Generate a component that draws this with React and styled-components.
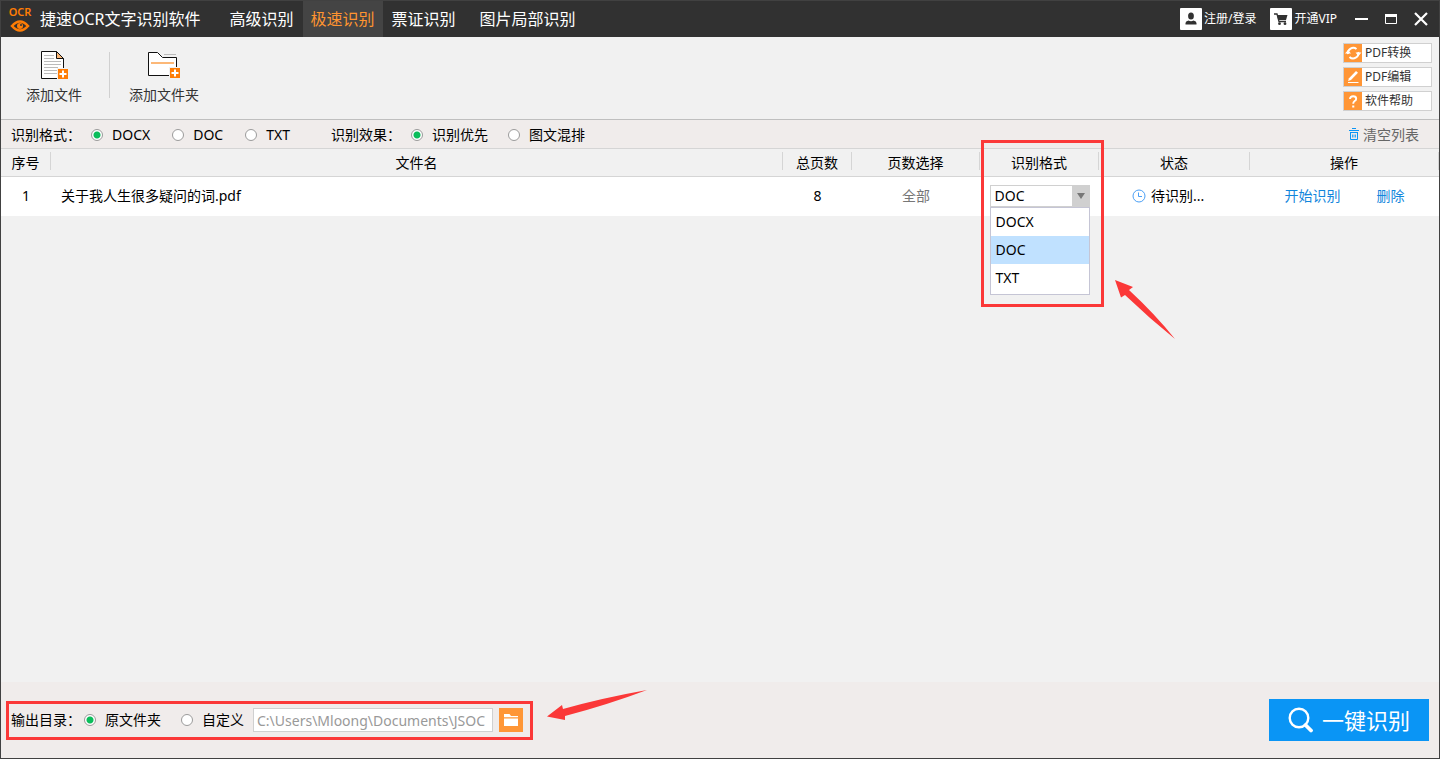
import React, { useState } from "react";
import styled, { createGlobalStyle } from "styled-components";

const GlobalStyle = createGlobalStyle`
  * {
    box-sizing: border-box;
  }

  body {
    margin: 0;
    font-family: "Noto Sans", "Noto Sans CJK SC", sans-serif;
    font-size: 14px;
    line-height: 20px;
    color: #000;
  }

  button,
  input,
  select {
    font: inherit;
    color: inherit;
  }

  button {
    padding: 0;
    border: none;
    background: none;
    cursor: pointer;
  }

  svg {
    display: block;
    flex: none;
  }
`;

const Window = styled.div`
  min-height: 100vh;
  display: flex;
  flex-direction: column;
  background: #f1f1f1;
  border: 1px solid #414141;
`;

const TitleBar = styled.header`
  display: flex;
  align-items: center;
  height: 36px;
  background: #313131;
  color: #fff;
`;

const Brand = styled.div`
  display: flex;
  align-items: center;
  gap: 7px;
  padding-left: 7px;
  margin-right: 21px;
  font-size: 16px;
`;

const Tabs = styled.nav`
  display: flex;
  flex: 1;
  align-self: stretch;
  gap: 1px;
`;

const Tab = styled.button`
  padding: 0 ${({ $wide }) => ($wide ? 15 : 8)}px;
  font-size: 16px;
  color: ${({ $active }) => ($active ? "#ff9430" : "#fff")};
  background: ${({ $active }) => ($active ? "#444" : "transparent")};
`;

const Account = styled.div`
  display: flex;
  gap: 14px;
  margin-right: 18px;
`;

const AccountButton = styled.button`
  display: flex;
  align-items: center;
  gap: 2px;
  font-size: 12px;
`;

const WindowControls = styled.div`
  display: flex;
  gap: 17px;
  padding-right: 11px;
`;

const Toolbar = styled.div`
  display: flex;
  justify-content: space-between;
  height: 83px;
  border-bottom: 1px solid #bfbfbf;
`;

const AddActions = styled.div`
  display: flex;
  align-items: flex-start;
  padding: 13px 0 0 25px;
`;

const AddButton = styled.button`
  display: flex;
  flex-direction: column;
  align-items: center;
  gap: 5px;
  color: #333;
`;

const Divider = styled.span`
  width: 1px;
  height: 46px;
  margin: 2px 19px 0 27px;
  background: #d0d0d0;
`;

const SideLinks = styled.div`
  display: flex;
  flex-direction: column;
  gap: 4px;
  width: 89px;
  margin: 6px 7px 0 0;
`;

const SideButton = styled.button`
  display: flex;
  align-items: center;
  gap: 3px;
  height: 20px;
  border: 1px solid #d0d0d0;
  background: #fff;
  font-size: 12px;
  line-height: 18px;
  color: #333;
`;

const OptionsBar = styled.div`
  display: flex;
  align-items: center;
  height: 29px;
  padding: 1px 20px 0 10px;
  background: #f0eceb;
  border-bottom: 1px solid #d5d5d5;
`;

const RadioGroup = styled.div`
  display: flex;
  align-items: center;
  gap: ${({ $gap }) => $gap}px;
  margin-right: 41px;
`;

const GroupLabel = styled.span`
  width: 70px;
  margin-right: ${({ $gap }) => $gap}px;
`;

const RadioLabel = styled.label`
  display: flex;
  align-items: center;
  gap: 9px;
`;

const RadioInput = styled.input`
  appearance: none;
  width: 12px;
  height: 12px;
  margin: 0;
  border: 1px solid #9b9b9b;
  border-radius: 50%;
  background: #fff;

  &:checked {
    background: radial-gradient(circle, #0bbd5b 3px, #fff 4px);
  }
`;

const ClearButton = styled.button`
  display: flex;
  align-items: center;
  gap: 4px;
  margin-left: auto;
  color: #666;
`;

const FileTable = styled.table`
  width: 100%;
  table-layout: fixed;
  border-collapse: collapse;
`;

const HeadCell = styled.th`
  width: ${({ $width }) => ($width ? `${$width}px` : "auto")};
  height: 27px;
  padding: 0;
  font-weight: 400;
  border-bottom: 1px solid #d5d5d5;
`;

const HeadLabel = styled.div`
  height: 18px;
  margin-bottom: 2px;
  line-height: 21px;
  border-right: 1px solid #d5d5d5;
`;

const Cell = styled.td`
  height: 40px;
  padding: 0 ${({ $indent }) => $indent || 0}px;
  text-align: ${({ $indent }) => ($indent ? "left" : "center")};
  background: #fff;
  color: ${({ $muted }) => ($muted ? "#777" : "#000")};
`;

const Status = styled.div`
  display: flex;
  align-items: center;
  gap: 5px;
  white-space: nowrap;
`;

const RowActions = styled.div`
  display: flex;
  justify-content: center;
  gap: 36px;
`;

const RowAction = styled.button`
  color: #1286dc;
`;

const FormatPicker = styled.div`
  position: relative;
  width: 100px;
  margin: 0 auto;
  text-align: left;
`;

const FormatSelect = styled.select`
  display: block;
  appearance: none;
  width: 100%;
  height: 22px;
  padding: 0 22px 0 4px;
  border: 1px solid #d0d0d0;
  border-radius: 0;
  background: #fff;
  line-height: 20px;
`;

const SelectArrow = styled.span`
  position: absolute;
  top: 0;
  right: 0;
  display: flex;
  align-items: center;
  justify-content: center;
  width: 18px;
  height: 22px;
  background: #d0d0d0;
  pointer-events: none;
`;

const FormatMenu = styled.ul`
  position: absolute;
  top: 22px;
  left: 0;
  z-index: 2;
  width: 100%;
  margin: 0;
  padding: 0 0 2px;
  list-style: none;
  background: #fff;
  border: 1px solid #c5c5d5;
`;

const FormatOption = styled.li`
  padding: 0 5px;
  line-height: 28px;
  background: ${({ $selected }) => ($selected ? "#c0e1ff" : "#fff")};
  cursor: pointer;
`;

const Highlight = styled.div`
  position: absolute;
  z-index: 3;
  border: 3px solid #fb3838;
  pointer-events: none;
`;

const FormatHighlight = styled(Highlight)`
  inset: -45px -14px -100px -9px;
`;

const OutputHighlight = styled(Highlight)`
  inset: -7px -10px -8px -5px;
`;

const FormatPointer = styled.svg`
  position: absolute;
  top: 95px;
  left: 125px;
  z-index: 3;
`;

const OutputPointer = styled.svg`
  position: absolute;
  bottom: 12px;
  left: calc(100% + 24px);
`;

const FileList = styled.main`
  flex: 1;
`;

const Footer = styled.footer`
  display: flex;
  align-items: center;
  justify-content: space-between;
  height: 76px;
  padding: 0 10px;
  background: #f0eceb;
`;

const Output = styled.div`
  position: relative;
  display: flex;
  align-items: center;
`;

const OutputChoices = styled.div`
  display: flex;
  gap: 20px;
  margin-right: 9px;
`;

const PathInput = styled.input`
  width: 240px;
  height: 24px;
  padding: 0 3px;
  border: 1px solid #d0d0d0;
  background: #fff;
  color: #999;
`;

const BrowseButton = styled.button`
  display: flex;
  align-items: center;
  justify-content: center;
  width: 24px;
  height: 24px;
  margin-left: 6px;
  background: #ff9636;
`;

const StartButton = styled.button`
  display: flex;
  align-items: center;
  justify-content: center;
  gap: 9px;
  width: 160px;
  height: 42px;
  background: #0a95f5;
  color: #fff;
  font-size: 22px;
`;

const LogoIcon = () => (
  <svg width="25" height="28" viewBox="0 0 25 28" fill="none" stroke="#ff7d05">
    <text
      x="12"
      y="11"
      fill="#ff7d05"
      stroke="none"
      fontSize="11"
      fontWeight="600"
      textAnchor="middle"
    >
      OCR
    </text>
    <path d="M4 21Q12 12 20 21Q12 30 4 21Z" strokeWidth="2.6" />
    <circle cx="12" cy="21" r="3" fill="#ff7d05" stroke="none" />
    <circle cx="13" cy="20" r="1" fill="#313131" stroke="none" />
  </svg>
);

const UserIcon = () => (
  <svg width="22" height="22" viewBox="0 0 22 22">
    <rect width="22" height="22" rx="1" fill="#fff" />
    <ellipse cx="11" cy="8" rx="2.9" ry="3.5" fill="#313131" />
    <path d="M5.5 16.5V15Q5.5 13 8.5 12.4Q11 14 13.5 12.4Q16.5 13 16.5 15V16.5Z" fill="#313131" />
  </svg>
);

const CartIcon = () => (
  <svg width="22" height="22" viewBox="0 0 22 22">
    <rect width="22" height="22" rx="1" fill="#fff" />
    <path d="M4 6H7L9 13.5H16" fill="none" stroke="#313131" strokeWidth="1.3" />
    <path d="M7 7H17.5L16 12H8.3Z" fill="#313131" />
    <circle cx="9.5" cy="15.7" r="1.4" fill="#313131" />
    <circle cx="15" cy="15.7" r="1.4" fill="#313131" />
  </svg>
);

const AddFileIcon = () => (
  <svg width="28" height="30" viewBox="0 0 28 30">
    <path d="M1.5 1.5H16.5L23.5 8.5V28.5H1.5Z" fill="#fff" stroke="#111" />
    <path d="M16.5 1.5V8.5H23.5Z" fill="#fcb878" stroke="#111" />
    <path
      d="M4 5.5H14M4 8.5H14M4 11.5H21M4 14.5H21M4 17.5H18M4 20.5H17M4 23.5H17"
      stroke="#bbb"
    />
    <path d="M17 18H28V30H17Z" fill="#f1f1f1" />
    <path d="M18 19H28V29H18Z" fill="#ff7d05" />
    <path d="M23 20.5V27.5M19.5 24H26.5" stroke="#fff" strokeWidth="2" />
  </svg>
);

const AddFolderIcon = () => (
  <svg width="34" height="30" viewBox="0 0 34 30">
    <path d="M1.5 2.5H10.5L15.5 7.5H29.5V25.5H1.5Z" fill="#fff" stroke="#111" />
    <path d="M17 4.5H29" stroke="#bbb" />
    <path d="M4 13H27" stroke="#fcb878" strokeWidth="2" />
    <path d="M22 17H34V29H22Z" fill="#f1f1f1" />
    <path d="M23 18H33V28H23Z" fill="#ff7d05" />
    <path d="M28 19.5V26.5M24.5 23H31.5" stroke="#fff" strokeWidth="2" />
  </svg>
);

const ConvertIcon = () => (
  <svg width="18" height="18" viewBox="0 0 18 18" fill="none" stroke="#fff" strokeWidth="2">
    <rect width="18" height="18" fill="#ff9636" stroke="none" />
    <path d="M4 10A5.3 5.3 0 0 1 12.5 5" />
    <path d="M14.3 8A5.3 5.3 0 0 1 5.5 13" />
    <path d="M1 9.5H7L4 6ZM11.5 8.5H17.5L14.3 12Z" fill="#fff" stroke="none" />
  </svg>
);

const EditIcon = () => (
  <svg width="18" height="18" viewBox="0 0 18 18">
    <rect width="18" height="18" fill="#ff9636" />
    <path d="M4 13L5 10.2L12 3L14 4.7L7 12Z" fill="#fff" />
    <path d="M4 14.5H14.5" stroke="#fff" />
  </svg>
);

const HelpIcon = () => (
  <svg width="18" height="18" viewBox="0 0 18 18">
    <rect width="18" height="18" fill="#ff9636" />
    <path
      d="M6 7Q6 4.2 9.2 4.2Q12.2 4.2 12.2 6.7Q12.2 8.3 10.4 9.2Q9.2 10 9.2 11.8"
      fill="none"
      stroke="#fff"
      strokeWidth="1.9"
    />
    <path d="M8.2 13.5H10.3V15.5H8.2Z" fill="#fff" />
  </svg>
);

const TrashIcon = () => (
  <svg width="10" height="13" viewBox="0 0 10 13" fill="none" stroke="#0a95f5">
    <path d="M0 2.5H10M3 .5H7M1.5 4.5V11.5H8.5V4.5M1 4.5H9" />
    <path d="M3.5 6.5V9.5M5 6.5V9.5M6.5 6.5V9.5" strokeWidth=".8" />
  </svg>
);

const ClockIcon = () => (
  <svg width="14" height="14" viewBox="0 0 14 14" fill="none" stroke="#4a9ff5">
    <circle cx="7" cy="7" r="6" />
    <path d="M6.5 3.5V7.5H10" />
  </svg>
);

const FolderIcon = () => (
  <svg width="14" height="12" viewBox="0 0 14 12" fill="#fff">
    <path d="M0 0H5.5L7 2H14V3.2H0ZM0 4.5H14V12H0Z" />
  </svg>
);

const SearchIcon = () => (
  <svg width="25" height="26" viewBox="0 0 25 26" fill="none" stroke="#fff">
    <circle cx="11" cy="11" r="9.3" strokeWidth="2.4" />
    <path d="M17.5 18L23 23.5" strokeWidth="3.8" strokeLinecap="round" />
  </svg>
);

const FORMATS = ["DOCX", "DOC", "TXT"];

const TABS = ["高级识别", "极速识别", "票证识别", "图片局部识别"];

const COLUMNS = [
  { label: "序号", width: 50 },
  { label: "文件名" },
  { label: "总页数", width: 69 },
  { label: "页数选择", width: 128 },
  { label: "识别格式", width: 119 },
  { label: "状态", width: 151 },
  { label: "操作", width: 189 },
];

function Radio({ name, value, current, onChange }) {
  return (
    <RadioLabel>
      <RadioInput
        type="radio"
        name={name}
        checked={current === value}
        onChange={() => onChange(value)}
      />
      {value}
    </RadioLabel>
  );
}

export default function App() {
  const [tab, setTab] = useState("极速识别");
  const [format, setFormat] = useState("DOCX");
  const [effect, setEffect] = useState("识别优先");
  const [fileFormat, setFileFormat] = useState("DOC");
  const [output, setOutput] = useState("原文件夹");
  const [path, setPath] = useState("C:\\Users\\Mloong\\Documents\\JSOC");

  return (
    <Window>
      <GlobalStyle />

      <TitleBar>
        <Brand>
          <LogoIcon />
          捷速OCR文字识别软件
        </Brand>
        <Tabs>
          {TABS.map((name) => (
            <Tab
              key={name}
              $active={tab === name}
              $wide={name.length > 4}
              onClick={() => setTab(name)}
            >
              {name}
            </Tab>
          ))}
        </Tabs>
        <Account>
          <AccountButton>
            <UserIcon />
            注册/登录
          </AccountButton>
          <AccountButton>
            <CartIcon />
            开通VIP
          </AccountButton>
        </Account>
        <WindowControls>
          <button aria-label="最小化">
            <svg width="13" height="14" viewBox="0 0 13 14">
              <path d="M0 7H13" stroke="#fff" strokeWidth="2" />
            </svg>
          </button>
          <button aria-label="最大化">
            <svg width="12" height="14" viewBox="0 0 12 14" fill="none" stroke="#fff">
              <path d="M.5 3V11.5H11.5V3" />
              <path d="M0 3.5H12" strokeWidth="3" />
            </svg>
          </button>
          <button aria-label="关闭">
            <svg width="14" height="14" viewBox="0 0 14 14">
              <path d="M1 1L13 13M13 1L1 13" stroke="#fff" strokeWidth="2.2" />
            </svg>
          </button>
        </WindowControls>
      </TitleBar>

      <Toolbar>
        <AddActions>
          <AddButton>
            <AddFileIcon />
            添加文件
          </AddButton>
          <Divider />
          <AddButton>
            <AddFolderIcon />
            添加文件夹
          </AddButton>
        </AddActions>
        <SideLinks>
          <SideButton>
            <ConvertIcon />
            PDF转换
          </SideButton>
          <SideButton>
            <EditIcon />
            PDF编辑
          </SideButton>
          <SideButton>
            <HelpIcon />
            软件帮助
          </SideButton>
        </SideLinks>
      </Toolbar>

      <OptionsBar>
        <GroupLabel $gap={10}>识别格式：</GroupLabel>
        <RadioGroup $gap={22}>
          {FORMATS.map((name) => (
            <Radio key={name} name="format" value={name} current={format} onChange={setFormat} />
          ))}
        </RadioGroup>
        <GroupLabel $gap={10}>识别效果：</GroupLabel>
        <RadioGroup $gap={20}>
          {["识别优先", "图文混排"].map((name) => (
            <Radio key={name} name="effect" value={name} current={effect} onChange={setEffect} />
          ))}
        </RadioGroup>
        <ClearButton>
          <TrashIcon />
          清空列表
        </ClearButton>
      </OptionsBar>

      <FileList>
        <FileTable>
          <thead>
            <tr>
              {COLUMNS.map(({ label, width }) => (
                <HeadCell key={label} $width={width}>
                  <HeadLabel>{label}</HeadLabel>
                </HeadCell>
              ))}
            </tr>
          </thead>
          <tbody>
            <tr>
              <Cell>1</Cell>
              <Cell $indent={10}>关于我人生很多疑问的词.pdf</Cell>
              <Cell>8</Cell>
              <Cell $muted>全部</Cell>
              <Cell>
                <FormatPicker>
                  <FormatSelect
                    aria-label="识别格式"
                    value={fileFormat}
                    onChange={(e) => setFileFormat(e.target.value)}
                  >
                    {FORMATS.map((name) => (
                      <option key={name}>{name}</option>
                    ))}
                  </FormatSelect>
                  <SelectArrow>
                    <svg width="8" height="6" viewBox="0 0 8 6">
                      <path d="M0 0H8L4 6Z" fill="#777" />
                    </svg>
                  </SelectArrow>
                  <FormatMenu role="listbox">
                    {FORMATS.map((name) => (
                      <FormatOption
                        key={name}
                        role="option"
                        aria-selected={fileFormat === name}
                        $selected={fileFormat === name}
                        onClick={() => setFileFormat(name)}
                      >
                        {name}
                      </FormatOption>
                    ))}
                  </FormatMenu>
                  <FormatHighlight />
                  <FormatPointer width="61" height="60" viewBox="0 0 61 60">
                    <path d="M0 0L18 7L14 10Q40 34 60 59Q34 38 10 15L6 17.5Z" fill="#fb3838" />
                  </FormatPointer>
                </FormatPicker>
              </Cell>
              <Cell $indent={33}>
                <Status>
                  <ClockIcon />
                  待识别...
                </Status>
              </Cell>
              <Cell>
                <RowActions>
                  <RowAction>开始识别</RowAction>
                  <RowAction>删除</RowAction>
                </RowActions>
              </Cell>
            </tr>
          </tbody>
        </FileTable>
      </FileList>

      <Footer>
        <Output>
          <GroupLabel $gap={3}>输出目录：</GroupLabel>
          <OutputChoices>
            {["原文件夹", "自定义"].map((name) => (
              <Radio key={name} name="output" value={name} current={output} onChange={setOutput} />
            ))}
          </OutputChoices>
          <PathInput
            aria-label="输出目录"
            value={path}
            onChange={(e) => setPath(e.target.value)}
          />
          <BrowseButton aria-label="浏览">
            <FolderIcon />
          </BrowseButton>
          <OutputHighlight />
          <OutputPointer width="100" height="30" viewBox="0 0 100 30">
            <path d="M0 26.5L15 15L16 19Q55 8 100 0Q60 15 18 26L18 30Z" fill="#fb3838" />
          </OutputPointer>
        </Output>
        <StartButton>
          <SearchIcon />
          一键识别
        </StartButton>
      </Footer>
    </Window>
  );
}
